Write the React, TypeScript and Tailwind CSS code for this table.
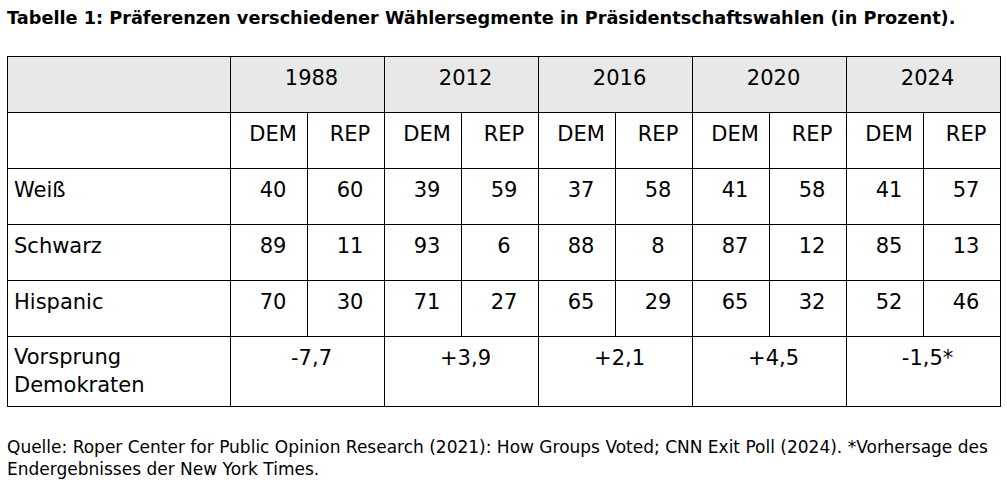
import React from "react";

const years = ["1988", "2012", "2016", "2020", "2024"];
const rows: { label: string; vals: string[] }[] = [
  { label: "Weiß", vals: ["40", "60", "39", "59", "37", "58", "41", "58", "41", "57"] },
  { label: "Schwarz", vals: ["89", "11", "93", "6", "88", "8", "87", "12", "85", "13"] },
  { label: "Hispanic", vals: ["70", "30", "71", "27", "65", "29", "65", "32", "52", "46"] },
];
const lead = ["-7,7", "+3,9", "+2,1", "+4,5", "-1,5*"];

export default function App() {
  const font = { fontFamily: '"DejaVu Sans", Verdana, sans-serif' };
  const cell = "border border-black align-top text-center pt-[7px] pl-[8px]";
  return (
    <div className="w-[1007px] h-[483px] bg-white text-black overflow-hidden" style={font}>
      <div className="pl-[7px] pt-[6px] text-[17.7px] leading-[24px] font-bold whitespace-nowrap">
        Tabelle 1: Präferenzen verschiedener Wählersegmente in Präsidentschaftswahlen (in Prozent).
      </div>
      <table className="ml-[7px] mt-[26px] border-collapse table-fixed w-[992px] text-[21px] leading-[28px]">
        <colgroup>
          <col className="w-[223px]" />
          {Array.from({ length: 10 }).map((_, i) => (
            <col key={i} className="w-[77px]" />
          ))}
        </colgroup>
        <tbody>
          <tr className="h-[56px] bg-[#e8e8e8]">
            <td className="border border-black align-top" />
            {years.map((y) => (
              <td key={y} colSpan={2} className={cell}>
                {y}
              </td>
            ))}
          </tr>
          <tr className="h-[56px]">
            <td className="border border-black align-top" />
            {years.map((y) => (
              <React.Fragment key={y}>
                <td className={cell}>DEM</td>
                <td className={cell}>REP</td>
              </React.Fragment>
            ))}
          </tr>
          {rows.map((r) => (
            <tr key={r.label} className="h-[56px]">
              <td className="border border-black align-top pt-[7px] pl-[6px]">{r.label}</td>
              {r.vals.map((v, i) => (
                <td key={i} className={cell}>
                  {v}
                </td>
              ))}
            </tr>
          ))}
          <tr className="h-[70px]">
            <td className="border border-black align-top pt-[6px] pl-[6px]">
              Vorsprung
              <br />
              Demokraten
            </td>
            {lead.map((v, i) => (
              <td key={i} colSpan={2} className={cell}>
                {v}
              </td>
            ))}
          </tr>
        </tbody>
      </table>
      <div className="pl-[7px] mt-[29px] text-[17px] leading-[22px] whitespace-nowrap">
        Quelle: Roper Center for Public Opinion Research (2021): How Groups Voted; CNN Exit Poll (2024). *Vorhersage des
        <br />
        Endergebnisses der New York Times.
      </div>
    </div>
  );
}
